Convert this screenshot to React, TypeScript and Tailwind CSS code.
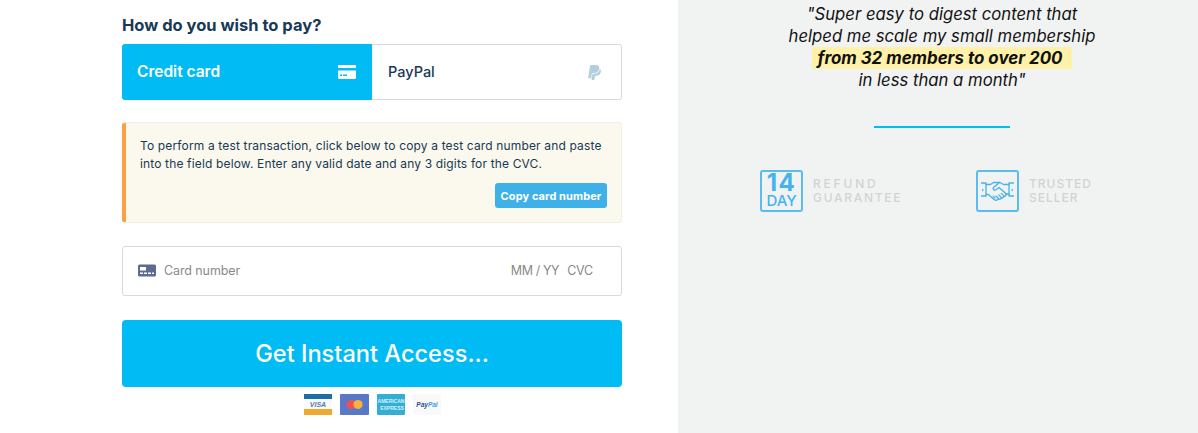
import { FaPaypal } from 'react-icons/fa'

function CardIcon() {
  return (
    <svg width="18" height="14" viewBox="0 0 18 14" fill="#fff" className="mr-[1px]">
      <path d="M1.2 0h15.6c.7 0 1.2.5 1.2 1.2V3H0V1.2C0 .5.5 0 1.2 0z" />
      <path d="M0 5.5h18v7.3c0 .7-.5 1.2-1.2 1.2H1.2C.5 14 0 13.5 0 12.8z" />
      <rect x="2" y="9.5" width="2" height="1.5" fill="#00bbf4" />
      <rect x="5" y="9.5" width="4" height="1.5" fill="#00bbf4" />
    </svg>
  )
}

function SmallCard() {
  return (
    <svg width="18" height="13" viewBox="0 0 18 13" className="shrink-0 -mt-[1px]">
      <rect width="18" height="12" y="0.5" rx="1.5" fill="#5d6b8c" />
      <rect x="2" y="3" width="6" height="3.5" fill="#fff" />
      <rect x="2" y="8.5" width="3" height="1.5" fill="#fff" />
      <rect x="6" y="8.5" width="3" height="1.5" fill="#fff" />
      <rect x="10" y="8.5" width="3" height="1.5" fill="#fff" />
      <rect x="14" y="8.5" width="2" height="1.5" fill="#fff" />
    </svg>
  )
}

function Handshake() {
  return (
    <svg width="33" height="21" viewBox="0 0 33 21" fill="none" stroke="#45b3ee" strokeWidth="1.3" strokeLinejoin="round" strokeLinecap="round">
      <path d="M0.5 2h4.5v13H0.5" />
      <path d="M32.5 2H28v13h4.5" />
      <path d="M5 3.5h4.5l3-2h6.5l3.5 2H28" />
      <path d="M18.5 1.5l-6 5c-1.2 1.6 .8 3.4 2.5 2.3l3-2.3 8 7" />
      <path d="M5 13.5h2.5l5.500 5c1.300 1 2.500 1 3.500 .2l1-.9c1 .9 2.400 .5 2.800-.9 1.200 .3 2.300-.4 2.500-1.500 1.100 .2 2.300-.8 2-2.100l1-.3H28" />
      <path d="M14 17l-1.800-1.700M17.500 17.500l-2.500-2.500M20.800 16.900l-3-3M23.300 15.400l-3-3" />
      <path d="M1.800 8.500v1M31.200 8.500v1" />
    </svg>
  )
}

function PayLogos() {
  return (
    <div className="flex justify-center items-center gap-[8px] mt-[7px] h-[21px] pl-[1px]">
      <svg width="28" height="21" viewBox="0 0 28 21">
        <rect width="28" height="21" fill="#fafafa" />
        <rect width="28" height="5" fill="#1a6fa8" />
        <rect y="15" width="28" height="6" fill="#efa92f" />
        <text x="14" y="12.500" textAnchor="middle" fontSize="7" fontWeight="800" fontStyle="italic" fill="#5b7ba8" fontFamily="Liberation Sans, sans-serif">VISA</text>
      </svg>
      <svg width="29" height="21" viewBox="0 0 29 21">
        <rect width="29" height="21" rx="1" fill="#5a78c8" />
        <circle cx="11" cy="10.500" r="4.600" fill="#f0504f" />
        <circle cx="18" cy="10.500" r="4.600" fill="#f9b13f" />
      </svg>
      <svg width="28" height="21" viewBox="0 0 28 21">
        <rect width="28" height="21" rx="1" fill="#33aed6" />
        <text x="14" y="9" textAnchor="middle" fontSize="5" fontWeight="700" fill="#d8f1f8" fontFamily="Liberation Sans, sans-serif">AMERICAN</text>
        <text x="15" y="16" textAnchor="middle" fontSize="5" fontWeight="700" fill="#d8f1f8" fontFamily="Liberation Sans, sans-serif">EXPRESS</text>
      </svg>
      <svg width="28" height="21" viewBox="0 0 28 21">
        <rect width="28" height="21" rx="1" fill="#f9f9f9" />
        <text x="14" y="13" textAnchor="middle" fontSize="6.500" fontWeight="800" fontStyle="italic" fontFamily="Liberation Sans, sans-serif">
          <tspan fill="#2f4f8f">Pay</tspan>
          <tspan fill="#3f9fdc">Pal</tspan>
        </text>
      </svg>
    </div>
  )
}

export default function App() {
  return (
    <div className="flex w-[1198px] h-[433px] overflow-hidden bg-white font-['Inter',sans-serif]">
      <div className="w-[678px] shrink-0 pl-[122px] pr-[56px] pt-[14px]">
        <h2 className="text-[16.500px] leading-[22px] font-bold text-[#173a56]">How do you wish to pay?</h2>

        <div className="flex h-[56px] mt-[8px] rounded-[3px] overflow-hidden">
          <div className="w-[250px] bg-[#00bbf4] flex items-center justify-between pl-[15px] pr-[15px] text-white text-[15.500px] font-semibold">
            Credit card
            <CardIcon />
          </div>
          <div className="flex-1 flex items-center justify-between pl-[16px] pr-[18px] border border-l-0 border-[#d8dcdf] rounded-r-[3px] text-[#173a56] text-[14.500px] font-medium">
            PayPal
            <FaPaypal className="text-[#b4cee0] text-[17px]" />
          </div>
        </div>

        <div className="mt-[22px] h-[101px] flex bg-[#fbf8ed] border border-l-0 border-[#f0efe8] rounded-[3px] overflow-hidden">
          <div className="w-[4px] bg-[#ff9f43] shrink-0" />
          <div className="flex-1 pl-[14px] pr-[14px] pt-[14px] text-[12px] leading-[18px] text-[#173a56]">
            <p className="tracking-[0.15px] whitespace-nowrap">To perform a test transaction, click below to copy a test card number and paste<br />into the field below. Enter any valid date and any 3 digits for the CVC.</p>
            <div className="flex justify-end mt-[10px]">
              <div className="h-[25px] w-[112px] flex items-center justify-center rounded-[3px] bg-[#3eb2e8] text-white text-[11px] tracking-[0.1px] font-bold">Copy card number</div>
            </div>
          </div>
        </div>

        <div className="mt-[23px] h-[50px] flex items-center border border-[#d8dadc] rounded-[3px] pl-[15px] pr-[28px] text-[12.500px] text-[#8a8a8a]">
          <SmallCard />
          <span className="ml-[8px] tracking-[-0.1px]">Card number</span>
          <span className="ml-auto tracking-[-0.4px]">MM / YY</span>
          <span className="ml-[8px] tracking-[-0.2px]">CVC</span>
        </div>

        <div className="mt-[24px] h-[67px] flex items-center justify-center rounded-[4px] bg-[#00bbf4] pt-[1px] text-white text-[23.600px] font-medium">
          Get Instant Access...
        </div>

        <PayLogos />
      </div>

      <div className="flex-1 bg-[#f1f3f3] flex flex-col items-center pl-[8px] pt-[3px]">
        <div className="text-[16.700px] leading-[22px] italic text-[#111] text-center whitespace-nowrap">
          <div>"Super easy to digest content that</div>
          <div>helped me scale my small membership</div>
          <div className="w-[260px] mx-auto bg-[#fff1a8] font-bold pr-[4px] text-[16.900px]">from 32 members to over 200</div>
          <div>in less than a month"</div>
        </div>

        <div className="w-[136px] h-[2px] bg-[#00bbf4] mt-[35px]" />

        <div className="flex mt-[42px] w-[332px] self-start ml-[74px]">
          <div className="flex w-[216px]">
            <div className="w-[43px] h-[42px] border-2 border-[#5bbcf0] rounded-[3px] flex flex-col items-center text-[#45b3ee]">
              <span className="text-[24px] font-bold leading-[21px] tracking-[1.500px]">14</span>
              <span className="text-[15px] font-medium leading-[15px]">DAY</span>
            </div>
            <div className="ml-[10px] mt-[7px] text-[12px] leading-[13.500px] font-medium text-[#d0d3d4] tracking-[1.700px]">
              <div className="tracking-[2.800px]">REFUND</div>
              <div>GUARANTEE</div>
            </div>
          </div>
          <div className="flex">
            <div className="w-[43px] h-[42px] border-2 border-[#5bbcf0] rounded-[3px] flex items-center justify-center">
              <Handshake />
            </div>
            <div className="ml-[10px] mt-[7px] text-[12px] leading-[13.500px] font-medium text-[#d0d3d4] tracking-[1px]">
              <div>TRUSTED</div>
              <div>SELLER</div>
            </div>
          </div>
        </div>
      </div>
    </div>
  )
}
